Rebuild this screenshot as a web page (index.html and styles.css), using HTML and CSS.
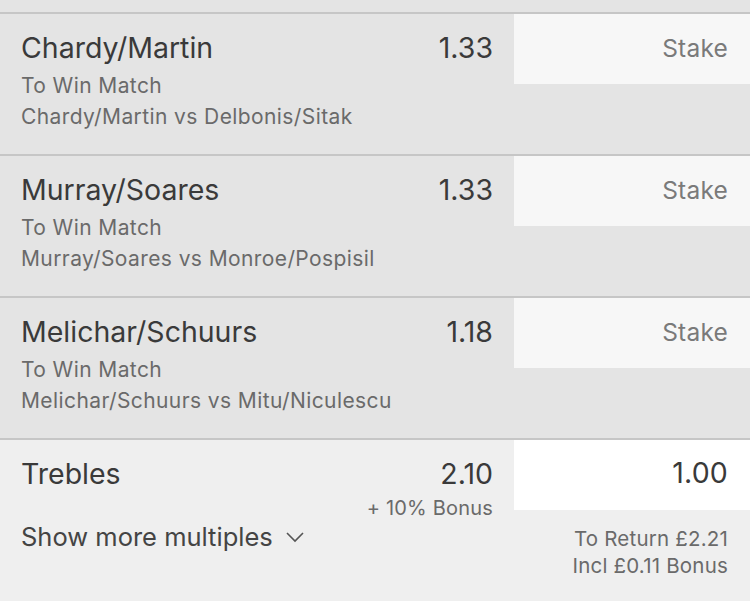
FILE: index.html
```html
<!DOCTYPE html>
<html lang="en">
<head>
  <meta charset="UTF-8">
  <title>Bet Slip</title>
  <link rel="stylesheet" href="styles.css">
</head>
<body>

  <div class="slip">

    <div class="bet">
      <div class="bet-info">
        <div class="bet-head">
          <span class="bet-name">Chardy/Martin</span>
          <span class="bet-odds">1.33</span>
        </div>
        <div class="bet-market">To Win Match</div>
        <div class="bet-event">Chardy/Martin vs Delbonis/Sitak</div>
      </div>
      <div class="stake-col">
        <div class="stake">Stake</div>
      </div>
    </div>

    <div class="bet">
      <div class="bet-info">
        <div class="bet-head">
          <span class="bet-name">Murray/Soares</span>
          <span class="bet-odds">1.33</span>
        </div>
        <div class="bet-market">To Win Match</div>
        <div class="bet-event">Murray/Soares vs Monroe/Pospisil</div>
      </div>
      <div class="stake-col">
        <div class="stake">Stake</div>
      </div>
    </div>

    <div class="bet">
      <div class="bet-info">
        <div class="bet-head">
          <span class="bet-name">Melichar/Schuurs</span>
          <span class="bet-odds">1.18</span>
        </div>
        <div class="bet-market">To Win Match</div>
        <div class="bet-event">Melichar/Schuurs vs Mitu/Niculescu</div>
      </div>
      <div class="stake-col">
        <div class="stake">Stake</div>
      </div>
    </div>

    <div class="multiple">
      <div class="bet-info">
        <div class="bet-head">
          <span class="bet-name">Trebles</span>
          <span class="bet-odds">2.10</span>
        </div>
        <div class="bonus">+ 10% Bonus</div>
        <div class="more">
          Show more multiples
          <svg width="20" height="12" viewBox="0 0 20 12">
            <path d="M2 2 L10 10 L18 2" fill="none" stroke="#555" stroke-width="1.6"/>
          </svg>
        </div>
      </div>
      <div class="stake-col">
        <div class="stake filled">1.00</div>
        <div class="returns">
          <div>To Return £2.21</div>
          <div>Incl £0.11 Bonus</div>
        </div>
      </div>
    </div>

  </div>

</body>
</html>
```

FILE: styles.css
```css
body {
  margin: 0;
  font-family: Inter, "Liberation Sans", sans-serif;
  background-color: #e4e4e4;
  color: #3a3a3a;
}

.slip {
  padding-top: 12px;
}

.bet,
.multiple {
  display: flex;
  border-top: 2px solid #c6c6c6;
  height: 140px;
  background-color: #e4e4e4;
}

.multiple {
  height: 161px;
  background-color: #efefef;
}

.bet-info {
  flex: 1;
  padding: 17px 21px 0 21px;
}

.bet-head {
  display: flex;
  justify-content: space-between;
  align-items: baseline;
  font-size: 28.5px;
  line-height: 34px;
  color: #3a3a3a;
}

.bet-market,
.bet-event {
  font-size: 21px;
  line-height: 31px;
  letter-spacing: 0.4px;
  color: #6a6a6a;
}

.bet-market {
  margin-top: 5px;
}

.stake-col {
  width: 236px;
}

.stake {
  height: 70px;
  background-color: #f7f7f7;
  color: #7a7a7a;
  font-size: 24.5px;
  letter-spacing: 0.2px;
  text-align: right;
  padding: 0 22px;
  line-height: 68px;
}

.stake.filled {
  background-color: #fff;
  color: #3a3a3a;
  font-size: 28.5px;
  line-height: 66px;
}

.bonus {
  margin-top: 4px;
  text-align: right;
  font-size: 20px;
  line-height: 26px;
  letter-spacing: 0.2px;
  color: #6a6a6a;
}

.more {
  font-size: 25.5px;
  color: #444;
  display: flex;
  align-items: center;
  gap: 12px;
}

.returns {
  padding: 15px 22px 0 0;
  text-align: right;
  font-size: 20.5px;
  line-height: 27px;
  letter-spacing: 0.2px;
  color: #6a6a6a;
}
```
